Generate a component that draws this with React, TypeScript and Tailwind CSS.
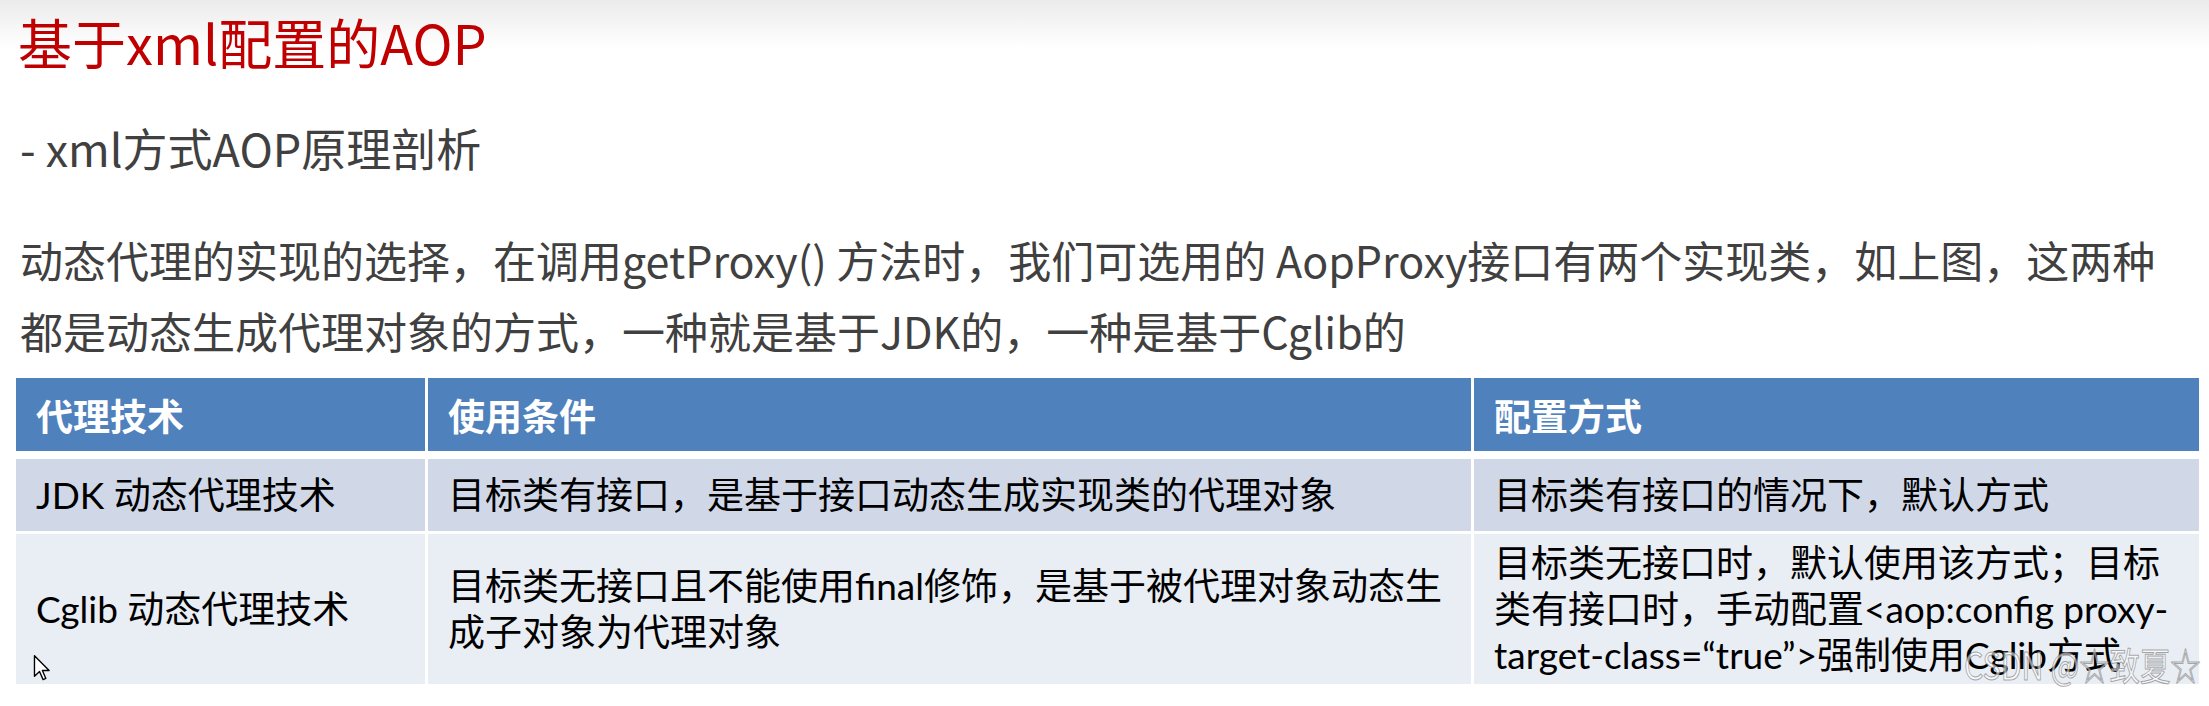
const FONT = "font-['Noto_Sans_CJK_SC','Noto_Sans',sans-serif]";
const BODY_FONT = "font-['Lato','Noto_Sans_CJK_SC',sans-serif]";

type Cell = { lines: string[] };

const rows: { bg: string; height: string; cells: Cell[] }[] = [
  {
    bg: "bg-[#d0d8e8]",
    height: "h-[72px]",
    cells: [
      { lines: ["JDK 动态代理技术"] },
      { lines: ["目标类有接口，是基于接口动态生成实现类的代理对象"] },
      { lines: ["目标类有接口的情况下，默认方式"] },
    ],
  },
  {
    bg: "bg-[#e9edf4]",
    height: "h-[150px]",
    cells: [
      { lines: ["Cglib 动态代理技术"] },
      {
        lines: [
          "目标类无接口且不能使用final修饰，是基于被代理对象动态生",
          "成子对象为代理对象",
        ],
      },
      {
        lines: [
          "目标类无接口时，默认使用该方式；目标",
          "类有接口时，手动配置<aop:config proxy-",
          "target-class=“true”>强制使用Cglib方式",
        ],
      },
    ],
  },
];

const headers = ["代理技术", "使用条件", "配置方式"];

function CursorIcon() {
  return (
    <svg width="18" height="26" viewBox="0 0 12 19" className="absolute left-[33px] top-[655px]">
      <path
        d="M0.5 0.5 L0.5 15.5 L4.2 12 L6.8 18 L8.8 17.1 L6.3 11.3 L11.2 11.3 Z"
        fill="#ffffff"
        stroke="#000000"
        strokeWidth="1"
        strokeLinejoin="round"
      />
    </svg>
  );
}

export default function App() {
  return (
    <div
      className={`relative w-[2209px] h-[706px] overflow-hidden bg-[linear-gradient(to_bottom,#ebebeb_0px,#ffffff_48px)] ${FONT}`}
    >
      {/* Slide title */}
      <h1 className="pl-[18px] mt-[12px] h-[60px] text-[54px] leading-[60px] font-normal text-[#c00000] whitespace-nowrap">
        基于xml配置的AOP
      </h1>

      {/* Sub heading */}
      <h2 className="pl-[20px] mt-[46px] h-[60px] text-[45px] leading-[60px] font-normal text-[#404040] whitespace-nowrap">
        - xml方式AOP原理剖析
      </h2>

      {/* Paragraph */}
      <p className="pl-[20px] mt-[46px] text-[43px] leading-[71px] text-[#404040] whitespace-nowrap">
        动态代理的实现的选择，在调用getProxy() 方法时，我们可选用的 AopProxy接口有两个实现类，如上图，这两种
        <br />
        都是动态生成代理对象的方式，一种就是基于JDK的，一种是基于Cglib的
      </p>

      {/* Table */}
      <div className="ml-[16px] mt-[12px] grid grid-cols-[409px_1043px_725px] gap-x-[3px] bg-white">
        {headers.map((h) => (
          <div
            key={h}
            className="h-[73px] bg-[#4f81bd] pl-[20px] flex items-center text-[37px] leading-[50px] font-bold text-white"
          >
            {h}
          </div>
        ))}
        {rows.map((row, ri) =>
          row.cells.map((cell, ci) => (
            <div
              key={`${ri}-${ci}`}
              className={`${row.bg} ${row.height} ${ri === 0 ? "mt-[8px]" : "mt-[3px]"} pl-[20px] flex flex-col justify-center text-[37px] leading-[46px] text-black whitespace-nowrap overflow-hidden ${BODY_FONT}`}
            >
              {cell.lines.map((l, li) => (
                <span key={li}>{l}</span>
              ))}
            </div>
          ))
        )}
      </div>

      <CursorIcon />

      {/* Watermark */}
      <div className="absolute left-[1964px] top-[640px] origin-left scale-x-[0.8] text-[38px] leading-[48px] whitespace-nowrap text-[rgba(255,255,255,0.6)] [-webkit-text-stroke:1px_rgba(110,110,110,0.6)]">
        CSDN @☆致夏☆
      </div>
    </div>
  );
}
